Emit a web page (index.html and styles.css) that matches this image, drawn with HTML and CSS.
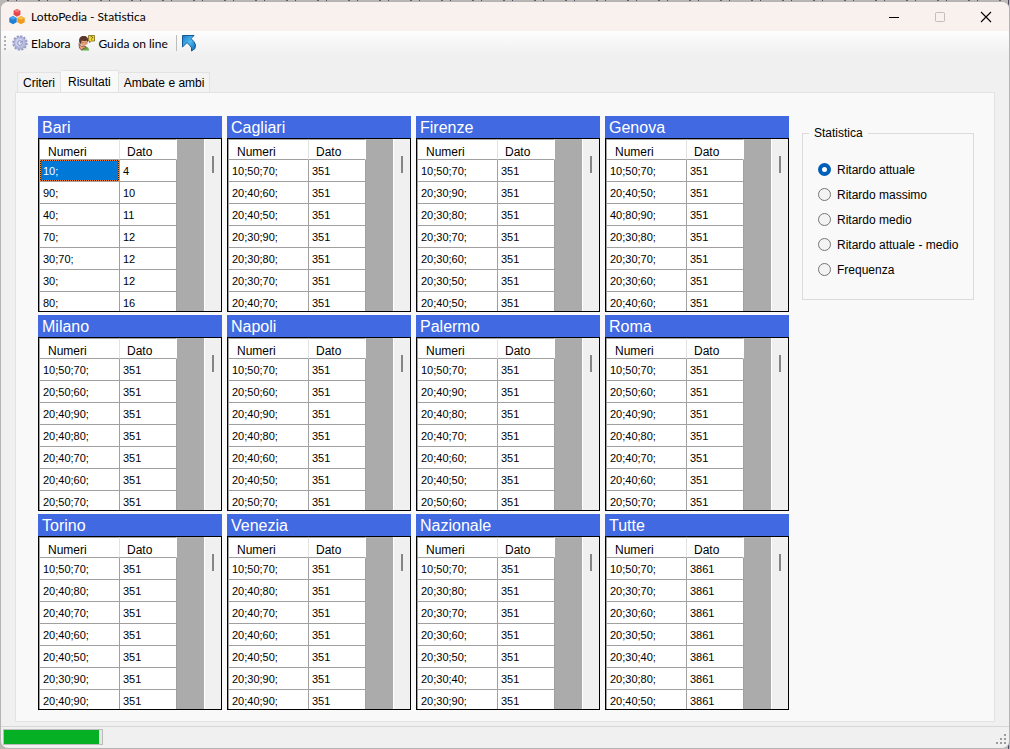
FILE: index.html
```
<!DOCTYPE html>
<html lang="it">
<head>
    <meta charset="UTF-8">
    <meta name="viewport" content="width=device-width, initial-scale=1.0">
    <title>LottoPedia - Statistica</title>
    <link rel="stylesheet" href="styles.css">
</head>
<body>
<div class="window">
    <header class="titlebar">
        <svg class="logo" width="16" height="16" viewBox="0 0 16 16">
            <path fill="#e8484c" d="M8 0l3.400 1.800v4L8 7.800 4.600 5.800v-4z"/>
            <path fill="#f4777a" d="M8 0l3.400 1.800L8 3.600 4.600 1.800z"/>
            <path fill="#1f7fd6" d="M4 7l3.700 1.900v4.300L4 15.300.3 13.200V8.900z"/>
            <path fill="#4aa5ee" d="M4 7l3.700 1.900L4 10.800.3 8.900z"/>
            <path fill="#f09a1c" d="M12 7l3.700 1.900v4.300L12 15.300l-3.700-2.100V8.900z"/>
            <path fill="#fbbd4c" d="M12 7l3.700 1.900-3.700 1.900-3.700-1.900z"/>
        </svg>
        <h1>LottoPedia - Statistica</h1>
        <div class="caption">
            <button type="button" aria-label="Riduci a icona">
                <svg width="12" height="12" viewBox="0 0 12 12"><path d="M1 6.500h10" stroke="#000"/></svg>
            </button>
            <button type="button" aria-label="Ingrandisci" disabled>
                <svg width="12" height="12" viewBox="0 0 12 12"><rect x="1.500" y="1.500" width="9" height="9" rx="1" fill="none" stroke="#c3bdbb"/></svg>
            </button>
            <button type="button" aria-label="Chiudi">
                <svg width="12" height="12" viewBox="0 0 12 12"><path d="M1 1l10 10M11 1L1 11" stroke="#000" stroke-width="1.100"/></svg>
            </button>
        </div>
    </header>

    <nav class="toolbar">
        <span class="grip"></span>
        <button type="button">
            <svg width="16" height="16" viewBox="0 0 16 16">
                <circle cx="8" cy="8" r="6.800" fill="none" stroke="#9298c4" stroke-width="1.800" stroke-dasharray="2.200 1.360"/>
                <circle cx="8" cy="8" r="6" fill="#b4b8dc" stroke="#9aa0cc" stroke-width=".8"/>
                <circle cx="7.500" cy="7.500" r="4" fill="#ccd0ec"/>
                <circle cx="8" cy="8" r="2.300" fill="#e9ebfa" stroke="#8088b4" stroke-width=".9"/>
                <path d="M8 8l3-2" stroke="#8a90c0"/>
            </svg>
            Elabora
        </button>
        <button type="button">
            <svg width="17" height="16" viewBox="0 0 17 16">
                <circle cx="6" cy="6.500" r="4" fill="#e8a47c"/>
                <path d="M1.500 8C0 3 3 .5 6 1c3.200 0 4.800 2.500 4 6L8.500 5.500c-2 .8-4 .5-4.800 0L3 9z" fill="#5a352d"/>
                <path d="M3 15.500c0-3 1.500-4 4-4s4 1.500 4 4z" fill="#68ad4c"/>
                <path d="M1 8.500l2.500 2.800 3.500-.3 1 1.500-2 .8-2.500 1.700-2-2z" fill="#e6a078" stroke="#754132" stroke-width=".8"/>
                <path d="M4.500 7.800h.8M7.500 7.800h.8" stroke="#552b20" stroke-width=".8"/>
                <path d="M10.500.5h6v5.500h-3l-2 1.500v-1.500h-1z" fill="#f4d83c" stroke="#7a6718" stroke-width=".8"/>
                <path d="M12.500 2q1-1 2 0t-1 1.400M13.500 4.300v.8" fill="none" stroke="#5b4a00" stroke-width=".8"/>
            </svg>
            Guida on line
        </button>
        <span class="separator"></span>
        <button type="button" aria-label="Esci">
            <svg width="16" height="18" viewBox="0 0 16 18">
                <defs>
                    <linearGradient id="arrow" x1="0" y1="0" x2="1" y2="1">
                        <stop offset="0" stop-color="#1c78c0"/>
                        <stop offset=".5" stop-color="#4cbcf2"/>
                        <stop offset="1" stop-color="#0c5fa8"/>
                    </linearGradient>
                </defs>
                <path d="M1.500 1.500h11.500L10 4.600l2.800 2.900q3 3.500 1 7.200L10.500 17q.8-3.500-1.500-5.500L6 8.600 1.500 13z" fill="url(#arrow)" stroke="#125a98" stroke-linejoin="round"/>
            </svg>
        </button>
    </nav>

    <main class="content">
        <div class="tabs" role="tablist">
            <button type="button" role="tab">Criteri</button>
            <button type="button" role="tab" class="active" aria-selected="true">Risultati</button>
            <button type="button" role="tab">Ambate e ambi</button>
        </div>
        <div class="page" role="tabpanel">
            <div class="wheels" id="wheels"></div>
            <fieldset class="stats">
                <legend>Statistica</legend>
                <label><input type="radio" name="stat" checked>Ritardo attuale</label>
                <label><input type="radio" name="stat">Ritardo massimo</label>
                <label><input type="radio" name="stat">Ritardo medio</label>
                <label><input type="radio" name="stat">Ritardo attuale - medio</label>
                <label><input type="radio" name="stat">Frequenza</label>
            </fieldset>
        </div>
    </main>

    <footer class="statusbar">
        <progress value="95" max="98" aria-label="Avanzamento"></progress>
        <svg width="11" height="11" viewBox="0 0 11 11" fill="#9a9a9a">
            <path d="M8 0h2v2H8zM4 4h2v2H4zM8 4h2v2H8zM0 8h2v2H0zM4 8h2v2H4zM8 8h2v2H8z"/>
        </svg>
    </footer>
</div>
<script src="script.js"></script>
</body>
</html>
```

FILE: styles.css
```
* {
    box-sizing: border-box;
}
body {
    margin: 0;
    height: 100vh;
    padding-top: 1px;
    font-family: "Liberation Sans", Arial, sans-serif;
    font-size: 12px;
    color: #000;
    background: repeating-linear-gradient(90deg, #b9b6b3 0 7px, #66605c 7px 9px, #bdbab8 9px 16px, #4d4a66 16px 17px, #b9b6b3 17px 31px);
}
h1, h2 {
    margin: 0;
    font-weight: normal;
}
button {
    border: 0;
    padding: 0;
    color: inherit;
    background: none;
    font: inherit;
}
.window {
    height: 100%;
    display: flex;
    flex-direction: column;
    overflow: hidden;
    border: 1px solid #b4b4b4;
    border-radius: 8px;
    background: #f0f0f0;
}

/* title bar */
.titlebar {
    flex: none;
    display: flex;
    align-items: center;
    height: 29px;
    padding-left: 8px;
    background: #f9f1ee;
}
.titlebar h1 {
    margin-left: 6px;
    font: 12px Lato, sans-serif;
}
.caption {
    display: flex;
    height: 100%;
    margin-left: auto;
}
.caption button {
    width: 46px;
    display: flex;
    align-items: center;
    justify-content: center;
}

/* toolbar */
.toolbar {
    flex: none;
    display: flex;
    align-items: center;
    height: 24px;
    padding-left: 3px;
    font: 12px Lato, sans-serif;
    background: linear-gradient(#fdfdfd, #f0f0f0);
}
.toolbar button {
    display: flex;
    align-items: center;
    gap: 3px;
    margin-right: 8px;
}
.grip {
    width: 2px;
    height: 14px;
    margin-right: 6px;
    background: repeating-linear-gradient(#b0b0b0 0 2px, transparent 2px 4px);
}
.separator {
    width: 1px;
    height: 16px;
    margin-right: 4px;
    background: #bdbdbd;
}

/* tabs */
.content {
    flex: 1;
    display: flex;
    flex-direction: column;
    padding: 15px 14px 4px;
}
.tabs {
    display: flex;
    align-items: flex-end;
    padding-left: 2px;
}
.tabs button {
    height: 20px;
    padding: 0 5px;
    border: 1px solid #e3e3e3;
    border-width: 1px 1px 0 0;
    background: #f3f3f3;
}
.tabs button:first-child {
    border-left-width: 1px;
}
.tabs .active {
    height: 23px;
    margin-bottom: -1px;
    padding: 0 7px 1px;
    background: #f9f9f9;
}
.page {
    flex: 1;
    display: flex;
    align-items: flex-start;
    gap: 13px;
    padding: 23px 20px 10px 22px;
    border: 1px solid #e3e3e3;
    background: #f9f9f9;
}

/* wheels */
.wheels {
    flex: 1;
    display: grid;
    grid-template-columns: repeat(4, 1fr);
    gap: 3px 5px;
}
.wheel h2 {
    height: 22px;
    padding-left: 4px;
    line-height: 24px;
    font-size: 16px;
    color: #fff;
    background: #4169e1;
}
.grid {
    display: flex;
    height: 174px;
    overflow: hidden;
    border: 1px solid #000;
    background: #ababab;
}
.grid table {
    width: 138px;
    table-layout: fixed;
    border-collapse: separate;
    border-spacing: 0;
    border-left: 1px solid #a0a0a0;
    align-self: flex-start;
}
.grid th {
    height: 21px;
    padding: 4px 0 0 8px;
    border-top: 1px solid #a0a0a0;
    border-bottom: 1px solid #a0a0a0;
    border-right: 1px solid #e3e3e3;
    font-weight: normal;
    line-height: 14px;
    text-align: left;
    background: #fff;
}
.grid th:first-child {
    width: 80px;
}
.grid th:last-child {
    padding-left: 7px;
    border-right-color: #fff;
}
.grid td {
    height: 22px;
    padding: 0 3px;
    border-right: 1px solid #a0a0a0;
    border-bottom: 1px solid #a0a0a0;
    font-size: 11px;
    background: #fff;
}
.grid .selected {
    position: relative;
    color: #fff;
    background: #0078d7;
    box-shadow: inset 0 0 0 1px #202020;
}
/* focus rectangle */
.grid .selected::after {
    content: "";
    position: absolute;
    inset: 0;
    border: 1px dotted #ff8728;
}
.scroll {
    width: 17px;
    margin-left: auto;
    padding: 17px 7px 0;
    border-left: 1px solid #fff;
    background: #f0f0f0;
}
.thumb {
    display: block;
    width: 2px;
    height: 17px;
    background: #858585;
}

/* statistics */
.stats {
    flex: none;
    width: 172px;
    height: 174px;
    margin: 10px 0 0;
    padding: 17px 0 0 15px;
    border: 1px solid #dcdcdc;
}
.stats legend {
    margin-left: -9px;
    padding: 0 5px;
}
.stats label {
    display: flex;
    align-items: center;
    gap: 6px;
    height: 25px;
    white-space: nowrap;
}
.stats input {
    appearance: none;
    width: 13px;
    height: 13px;
    margin: 0;
    border: 1px solid #767676;
    border-radius: 50%;
    background: #f3f3f3;
}
.stats input:checked {
    border: 4px solid #005fb8;
    background: #fff;
}

/* status bar */
.statusbar {
    flex: none;
    display: flex;
    align-items: flex-end;
    justify-content: space-between;
    height: 22px;
    padding: 0 2px 3px;
    border-top: 1px solid #d7d7d7;
}
.statusbar progress {
    appearance: none;
    width: 100px;
    height: 16px;
    border: 1px solid #bcbcbc;
    background: #e6e6e6;
}
.statusbar progress::-webkit-progress-bar {
    background: #e6e6e6;
}
.statusbar progress::-webkit-progress-value {
    background: #06b025;
}
```

FILE: script.js
```
// one entry per wheel: name, value for every row (or a list), combinations
const wheels = [
    ['Bari', [4, 10, 11, 12, 12, 12, 16], '10; 90; 40; 70; 30;70; 30; 80;'],
    ['Cagliari', 351, '10;50;70; 20;40;60; 20;40;50; 20;30;90; 20;30;80; 20;30;70; 20;40;70;'],
    ['Firenze', 351, '10;50;70; 20;30;90; 20;30;80; 20;30;70; 20;30;60; 20;30;50; 20;40;50;'],
    ['Genova', 351, '10;50;70; 20;40;50; 40;80;90; 20;30;80; 20;30;70; 20;30;60; 20;40;60;'],
    ['Milano', 351, '10;50;70; 20;50;60; 20;40;90; 20;40;80; 20;40;70; 20;40;60; 20;50;70;'],
    ['Napoli', 351, '10;50;70; 20;50;60; 20;40;90; 20;40;80; 20;40;60; 20;40;50; 20;50;70;'],
    ['Palermo', 351, '10;50;70; 20;40;90; 20;40;80; 20;40;70; 20;40;60; 20;40;50; 20;50;60;'],
    ['Roma', 351, '10;50;70; 20;50;60; 20;40;90; 20;40;80; 20;40;70; 20;40;60; 20;50;70;'],
    ['Torino', 351, '10;50;70; 20;40;80; 20;40;70; 20;40;60; 20;40;50; 20;30;90; 20;40;90;'],
    ['Venezia', 351, '10;50;70; 20;40;80; 20;40;70; 20;40;60; 20;40;50; 20;30;90; 20;40;90;'],
    ['Nazionale', 351, '10;50;70; 20;30;80; 20;30;70; 20;30;60; 20;30;50; 20;30;40; 20;30;90;'],
    ['Tutte', 3861, '10;50;70; 20;30;70; 20;30;60; 20;30;50; 20;30;40; 20;30;80; 20;40;50;']
];

document.getElementById('wheels').innerHTML = wheels.map(function([name, values, numbers], w) {
    const rows = numbers.split(' ').map(function(n, i) {
        const value = Array.isArray(values) ? values[i] : values;
        const cls = w == 0 && i == 0 ? ' class="selected"' : '';
        return '<tr><td' + cls + '>' + n + '</td><td>' + value + '</td></tr>';
    }).join('');
    return '<section class="wheel"><h2>' + name + '</h2><div class="grid">' +
        '<table><thead><tr><th>Numeri</th><th>Dato</th></tr></thead><tbody>' + rows + '</tbody></table>' +
        '<div class="scroll"><span class="thumb"></span></div></div></section>';
}).join('');
```
